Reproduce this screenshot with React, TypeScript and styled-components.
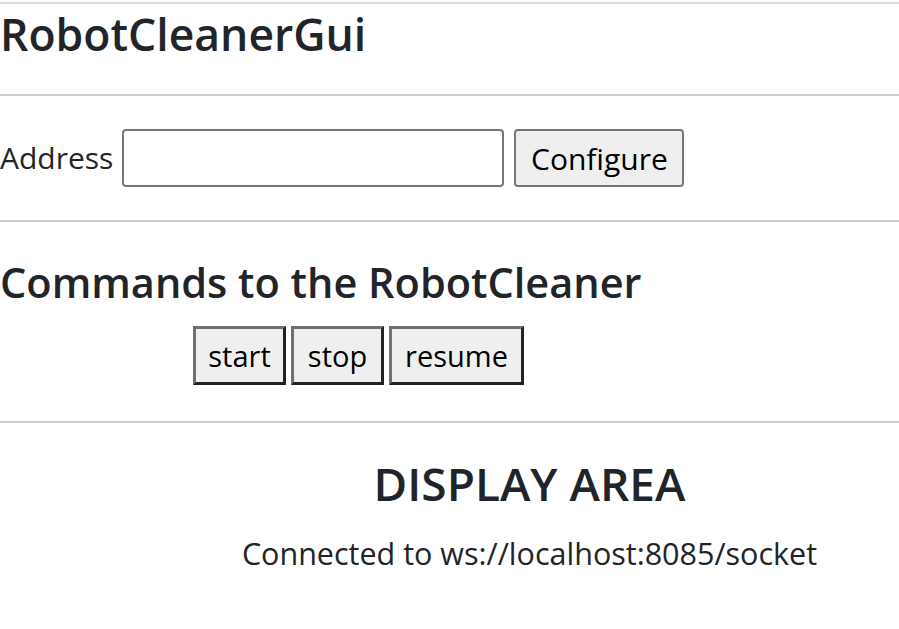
import React from "react";
import styled, { createGlobalStyle } from "styled-components";

const Global = createGlobalStyle`
  html, body { margin: 0; padding: 0; background: #fff; }
  body {
    font-family: "Open Sans", "Noto Sans", sans-serif;
    color: #212529;
  }
`;

const Page = styled.div`
  width: 899px;
  display: flex;
  flex-direction: column;
`;

const Rule = styled.div<{ $light?: boolean; $top: number }>`
  height: 2px;
  margin-top: ${(p) => p.$top}px;
  background: ${(p) => (p.$light ? "#dedede" : "#cbcbcb")};
`;

const Title = styled.h1`
  margin: 0;
  font-size: 44.5px;
  font-weight: 600;
  line-height: 60px;
  height: 60px;
`;

const AddressRow = styled.div`
  display: flex;
  align-items: center;
  gap: 9px;
  margin-top: 33px;
  height: 58px;
`;

const Label = styled.label`
  font-size: 30px;
  line-height: 1;
`;

const AddressInput = styled.input`
  box-sizing: border-box;
  width: 382px;
  height: 58px;
  border: 2px solid #767676;
  border-radius: 4px;
  margin: 0;
  padding: 0 4px;
  font: inherit;
  background: #fff;
`;

const ConfigureButton = styled.button`
  box-sizing: border-box;
  width: 170px;
  height: 58px;
  margin-left: 1px;
  border: 2px solid #767676;
  border-radius: 4px;
  background: #efefef;
  color: #000;
  font-family: inherit;
  font-size: 30px;
  padding: 0;
`;

const SectionTitle = styled.h2`
  margin: 0;
  margin-top: 30px;
  font-size: 41.5px;
  font-weight: 600;
  line-height: 60px;
`;

const CommandRow = styled.div`
  display: flex;
  gap: 5px;
  padding-left: 193px;
  margin-top: 14px;
`;

const CommandButton = styled.button<{ $w: number }>`
  box-sizing: border-box;
  width: ${(p) => p.$w}px;
  height: 59px;
  border: 3px solid;
  border-color: #707070 #222 #222 #707070;
  background: #efefef;
  color: #000;
  font-family: inherit;
  font-size: 29px;
  padding: 0;
  margin: 0;
`;

const Display = styled.div`
  margin-left: 160px;
  text-align: center;
  display: flex;
  flex-direction: column;
  align-items: center;
`;

const DisplayTitle = styled.h2`
  margin: 30px 0 0;
  font-size: 46px;
  font-weight: 600;
  line-height: 60px;
`;

const Status = styled.div`
  margin-top: 20px;
  font-size: 30.5px;
  line-height: 40px;
`;

export default function App() {
  return (
    <Page>
      <Global />
      <Rule $light $top={2} />
      <Title>RobotCleanerGui</Title>
      <Rule $top={30} />
      <AddressRow>
        <Label>Address</Label>
        <AddressInput type="text" />
        <ConfigureButton>Configure</ConfigureButton>
      </AddressRow>
      <Rule $top={33} />
      <SectionTitle>Commands to the RobotCleaner</SectionTitle>
      <CommandRow>
        <CommandButton $w={93}>start</CommandButton>
        <CommandButton $w={93}>stop</CommandButton>
        <CommandButton $w={135}>resume</CommandButton>
      </CommandRow>
      <Rule $top={36} />
      <Display>
        <DisplayTitle>DISPLAY AREA</DisplayTitle>
        <Status>Connected to ws://localhost:8085/socket</Status>
      </Display>
    </Page>
  );
}
